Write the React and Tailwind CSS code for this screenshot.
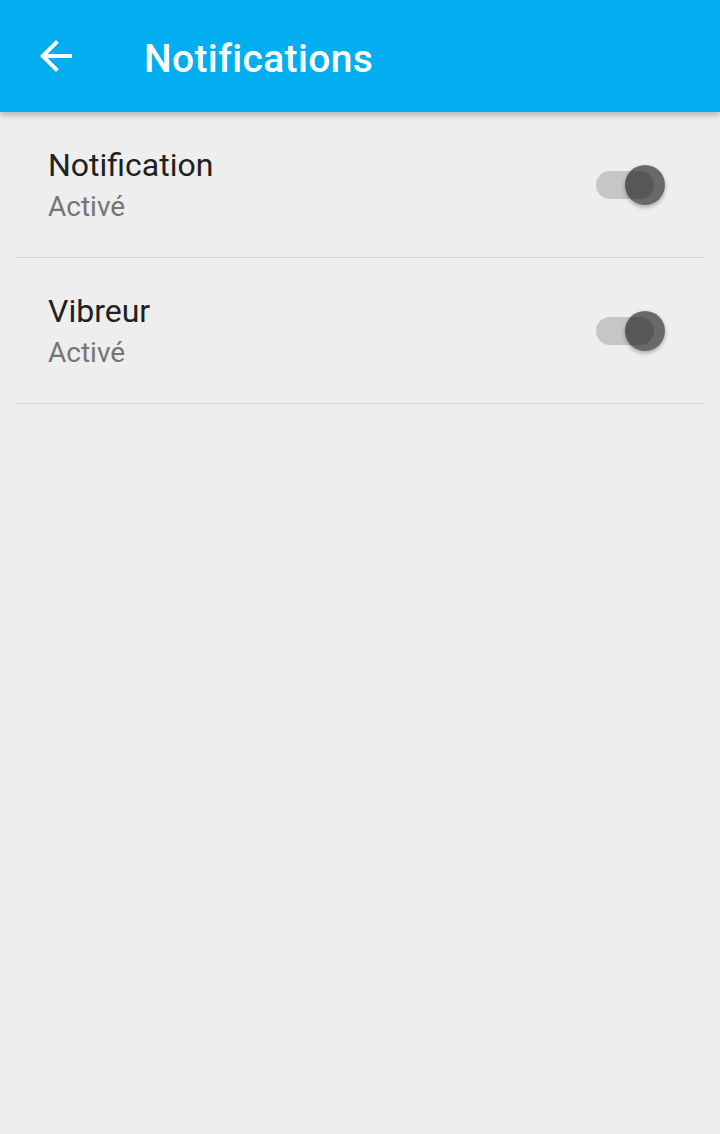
const settings = [
  { title: 'Notification', value: 'Activé' },
  { title: 'Vibreur', value: 'Activé' },
];

function Toggle() {
  return (
    <div className="relative w-[58px] h-[28px] rounded-full bg-black/[0.17]">
      <div className="absolute left-[29px] top-[-6px] w-[40px] h-[40px] rounded-full bg-black/[0.56] shadow-[0_2px_4px_rgba(0,0,0,0.3)]" />
    </div>
  );
}

export default function App() {
  return (
    <div className="min-h-screen bg-[#eeeeee] font-['Roboto',sans-serif]">
      <header className="h-[112px] bg-[#02aeef] flex items-center shadow-[0_3px_6px_rgba(0,0,0,0.25)] relative z-10">
        <button className="w-[48px] h-[48px] ml-[32px] flex items-center justify-center text-white">
          <svg width="48" height="48" viewBox="0 0 24 24" fill="white">
            <path d="M20 11H7.83l5.59-5.59L12 4l-8 8 8 8 1.41-1.41L7.83 13H20v-2z" />
          </svg>
        </button>
        <h1 className="ml-[64px] pt-[6px] text-white text-[39px] tracking-[0.35px] font-medium">Notifications</h1>
      </header>

      <div className="px-[16px]">
        {settings.map((s) => (
          <div key={s.title} className="flex items-center h-[146px] border-b border-[#d6d6d6]">
            <div className="flex-1 pl-[32px] pt-[4px]">
              <div className="text-[32px] leading-[40px] text-[#212121]">{s.title}</div>
              <div className="text-[28px] leading-[43px] text-[#757575]">{s.value}</div>
            </div>
            <div className="mr-[50px]">
              <Toggle />
            </div>
          </div>
        ))}
      </div>
    </div>
  );
}
